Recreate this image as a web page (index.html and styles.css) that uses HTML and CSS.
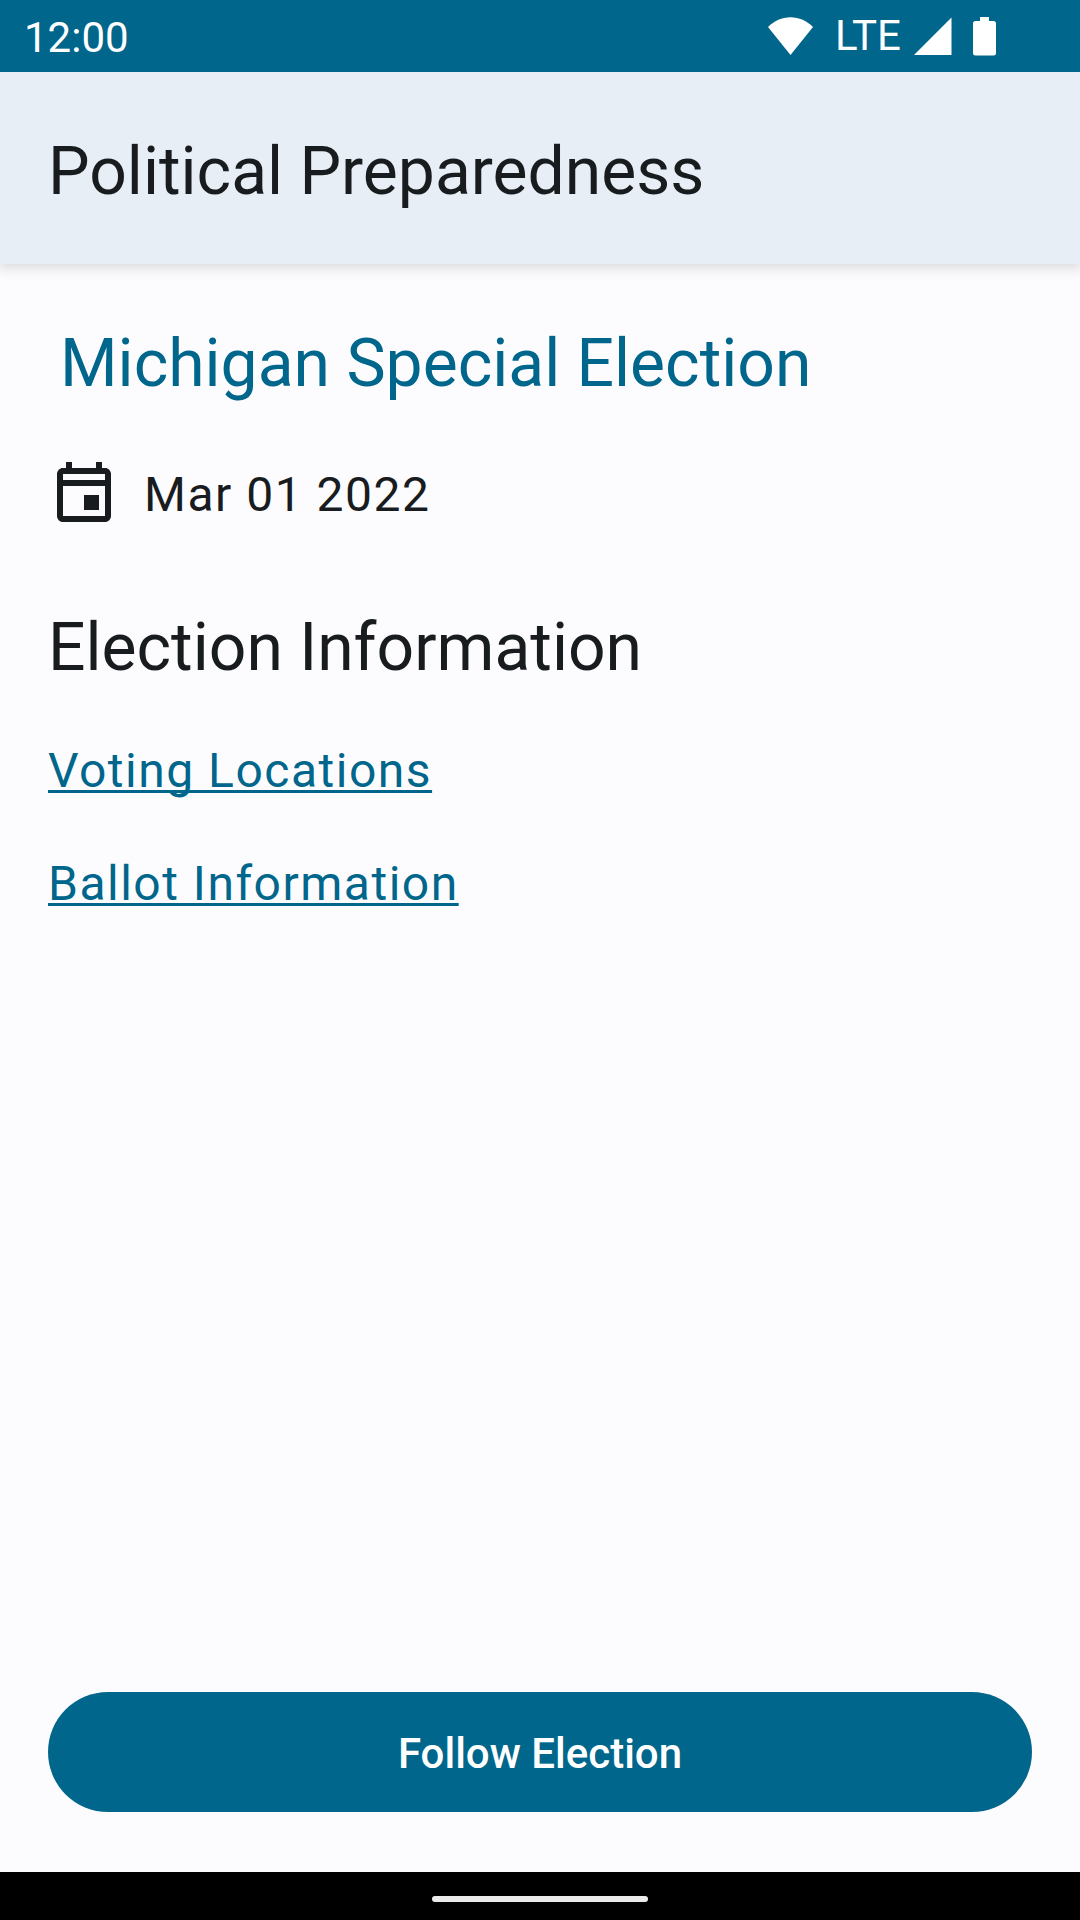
FILE: index.html
```html
<!DOCTYPE html>
<html lang="en">
<head>
<meta charset="utf-8">
<meta name="viewport" content="width=device-width, initial-scale=1">
<title>Political Preparedness</title>
<link rel="stylesheet" href="styles.css">
</head>
<body>
<div class="status-bar">
  <span>12:00</span>
  <div class="status-icons">
    <svg class="wifi" viewBox="0 0 45 38" aria-hidden="true"><path d="M0 10C6 4 14 .3 22.500 .3S39 4 45 10L22.500 38z"/></svg>
    <span class="network">LTE</span>
    <svg class="signal" viewBox="0 0 38 38" aria-hidden="true"><path d="M0 38L37.500 .5V38z"/></svg>
    <svg class="battery" viewBox="0 0 23 39" aria-hidden="true"><path d="M7 0h9v4h4.500a2.500 2.500 0 0 1 2.500 2.500v29.500a2.500 2.500 0 0 1-2.500 2.500h-18a2.500 2.500 0 0 1-2.500-2.500v-29.500a2.500 2.500 0 0 1 2.500-2.500h4.500z"/></svg>
  </div>
</div>
<header class="app-bar">
  <div class="title">Political Preparedness</div>
</header>
<main class="content">
  <h1 class="title election-name">Michigan Special Election</h1>
  <div class="date">
    <svg class="calendar" viewBox="0 0 24 24" aria-hidden="true"><path fill-rule="evenodd" d="M19 3h-1V1h-2v2H8V1H6v2H5c-1.100 0-2 .9-2 2v14c0 1.100.9 2 2 2h14c1.100 0 2-.9 2-2V5c0-1.100-.9-2-2-2zM5 19V9h14v10zM5 7V5h14v2zM12 12h5v5h-5z"/></svg>
    <time datetime="2022-03-01">Mar 01 2022</time>
  </div>
  <h2 class="title section-title">Election Information</h2>
  <nav class="links">
    <a href="#locations">Voting Locations</a>
    <a href="#ballot">Ballot Information</a>
  </nav>
  <button class="follow" type="button">Follow Election</button>
</main>
<footer class="nav-bar"><div class="handle"></div></footer>
</body>
</html>
```
FILE: styles.css
```css
* {
  box-sizing: border-box;
}

body {
  display: flex;
  flex-direction: column;
  min-height: 100vh;
  margin: 0;
  background: #fcfcff;
  color: #191c1e;
  font-family: Roboto, sans-serif;
  font-size: 48px;
  line-height: 72px;
}

svg {
  display: block;
  flex: none;
  fill: currentColor;
}

.status-bar {
  display: flex;
  justify-content: space-between;
  height: 72px;
  padding: 0 84px 0 24px;
  background: #00668b;
  color: #fff;
  font-size: 42px;
  line-height: 76px;
}

.status-icons {
  display: flex;
  align-items: center;
}

.wifi {
  width: 45px;
  height: 38px;
}

.network {
  margin: 0 13px 0 22px;
}

.signal {
  width: 38px;
  height: 38px;
}

.battery {
  width: 23px;
  height: 39px;
  margin-left: 21px;
}

.app-bar {
  padding: 58px 48px 50px;
  background: #e7eef5;
  box-shadow: 0 2px 12px 2px rgba(0, 0, 0, 0.14);
}

.title {
  margin: 0;
  font-size: 66px;
  font-weight: 400;
  line-height: 84px;
}

.content {
  display: flex;
  flex: 1;
  flex-direction: column;
  padding: 58px 48px 60px;
}

.election-name {
  padding-left: 12px;
  color: #00668b;
}

.date {
  display: flex;
  gap: 24px;
  margin-top: 53px;
  letter-spacing: 0.03125em;
}

.calendar {
  width: 72px;
  height: 72px;
}

.section-title {
  margin-top: 75px;
}

.links {
  display: flex;
  flex-direction: column;
  align-items: flex-start;
  gap: 41px;
  margin-top: 45px;
  letter-spacing: 0.03125em;
}

.links a {
  color: #00668b;
  text-decoration: underline 3px;
  text-decoration-skip-ink: none;
  text-underline-offset: 3px;
}

.follow {
  height: 120px;
  margin-top: auto;
  padding: 4px 72px 0;
  border: 0;
  border-radius: 60px;
  background: #00668b;
  color: #fff;
  font: 500 42px/60px Roboto, sans-serif;
}

.status-bar,
.nav-bar {
  position: relative;
}

.nav-bar {
  display: flex;
  justify-content: center;
  height: 48px;
  padding-top: 24px;
  background: #000;
}

.handle {
  width: 216px;
  height: 6px;
  border-radius: 3px;
  background: #ebebeb;
}
```
